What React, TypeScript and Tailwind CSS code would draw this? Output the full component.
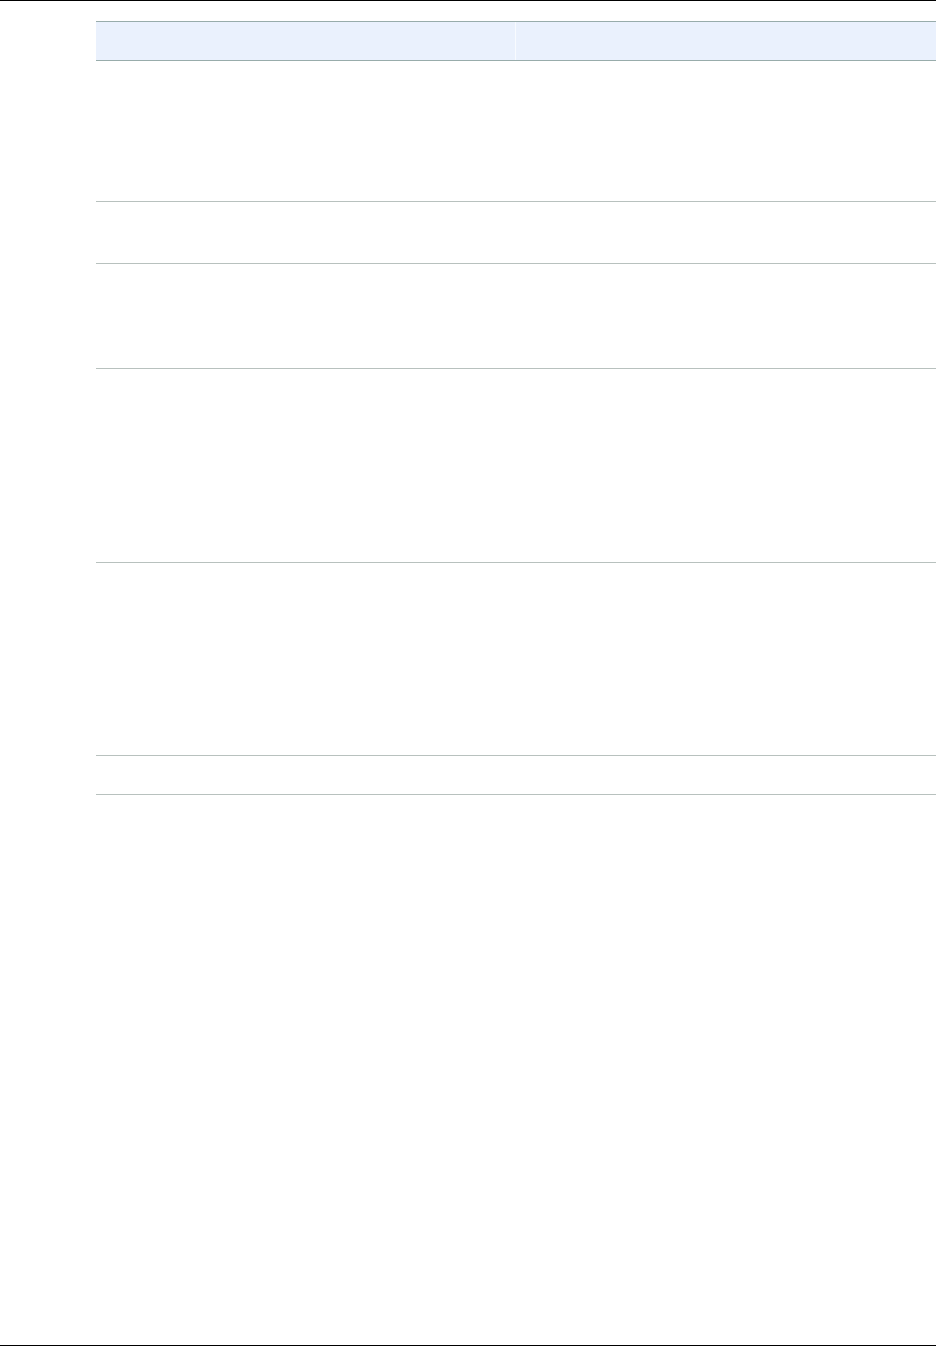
const ROWS = [140, 61, 104, 193, 192, 38]

export default function App() {
  return (
    <div className="flex h-[1347px] flex-col bg-white font-['Liberation_Sans',sans-serif]">
      <div className="h-px bg-black" />
      <div className="pt-[20px] pl-[96px]">
        <div className="flex h-[40px] border-y border-[#98acab] bg-[#eaf1fd]">
          <div className="w-[419px]" />
          <div className="w-px bg-[#f8fbff]" />
          <div className="flex-1" />
        </div>
        {ROWS.map((h, i) => (
          <div key={i} className="flex border-b border-[#b8c1be]" style={{ height: h + 1 }}>
            <div className="w-[420px]" />
            <div className="flex-1" />
          </div>
        ))}
      </div>
      <div className="flex-1" />
      <div className="h-px bg-black" />
      <div className="h-px" />
    </div>
  )
}
